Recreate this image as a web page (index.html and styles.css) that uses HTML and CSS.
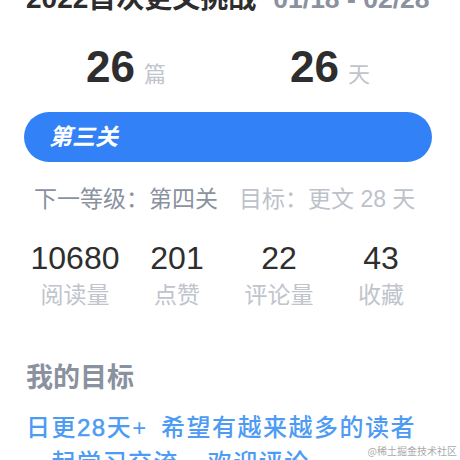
FILE: index.html
```html
<!DOCTYPE html>
<html lang="zh-CN">
<head>
<meta charset="utf-8">
<link rel="stylesheet" href="styles.css">
</head>
<body>
<div class="page">
  <div class="header">
    <span class="title">2022首次更文挑战</span>
    <span class="date">01/18 - 02/28</span>
  </div>
  <div class="totals">
    <div class="total"><span class="big">26</span><span class="unit">篇</span></div>
    <div class="total"><span class="big">26</span><span class="unit">天</span></div>
  </div>
  <div class="level">第三关</div>
  <div class="next">
    <span class="next-level">下一等级：第四关</span>
    <span class="next-goal">目标：更文 28 天</span>
  </div>
  <div class="stats">
    <div class="stat"><div class="num">10680</div><div class="label">阅读量</div></div>
    <div class="stat"><div class="num">201</div><div class="label">点赞</div></div>
    <div class="stat"><div class="num">22</div><div class="label">评论量</div></div>
    <div class="stat"><div class="num">43</div><div class="label">收藏</div></div>
  </div>
  <div class="goal-title">我的目标</div>
  <div class="goal-text">日更<span class="digits">28</span>天+ 希望有越来越多的读者<br>一起学习交流~ 欢迎评论</div>
</div>
<div class="watermark">@稀土掘金技术社区</div>
</body>
</html>
```

FILE: styles.css
```css
* { box-sizing: border-box; }
html, body { margin: 0; padding: 0; background: #fff; }
body {
  width: 460px;
  height: 460px;
  overflow: hidden;
  position: relative;
  font-family: "Liberation Sans", "Noto Sans CJK SC", sans-serif;
  color: #333;
}
.page {
  width: 408px;
  margin-left: 24px;
  margin-top: -15px;
}
.header {
  display: flex;
  align-items: baseline;
  gap: 17px;
  height: 28px;
  line-height: 28px;
  padding-left: 2px;
}
.title {
  font-size: 28px;
  font-weight: 700;
  color: #2d2d2d;
}
.date {
  font-size: 26.5px;
  font-weight: 700;
  color: #8a919f;
}
.totals {
  display: grid;
  grid-template-columns: 1fr 1fr;
  margin-top: 30px;
  height: 47px;
}
.total {
  display: flex;
  justify-content: center;
  align-items: baseline;
  gap: 9px;
  line-height: 47px;
}
.big {
  font-size: 44px;
  font-weight: 700;
  color: #2e2e2e;
}
.unit {
  font-size: 22px;
  color: #c0c4cc;
}
.level {
  margin-top: 22px;
  height: 50px;
  border-radius: 25px;
  background: #3281f6;
  color: #fff;
  font-size: 23px;
  font-weight: 700;
  font-style: italic;
  line-height: 50px;
  padding-left: 25px;
}
.next {
  display: flex;
  margin-top: 22px;
  padding-left: 10px;
  gap: 21px;
  font-size: 23px;
  line-height: 30px;
}
.next-level { color: #8a919f; }
.next-goal { color: #bcc1ca; }
.stats {
  display: grid;
  grid-template-columns: repeat(4, 1fr);
  margin-top: 26px;
  text-align: center;
}
.num {
  font-size: 32px;
  line-height: 36px;
  color: #2e2e2e;
}
.label {
  font-size: 23px;
  line-height: 32px;
  margin-top: 3px;
  color: #c0c4cc;
}
.goal-title {
  margin-top: 49px;
  padding-left: 2px;
  font-size: 27px;
  font-weight: 700;
  line-height: 36px;
  color: #8a919f;
}
.goal-text {
  margin-top: 14px;
  padding-left: 2px;
  font-size: 24px;
  font-weight: 500;
  letter-spacing: 1.5px;
  word-spacing: 5px;
  line-height: 35px;
  color: #4d9bf4;
}
.digits {
  -webkit-text-stroke: 0.5px #4d9bf4;
}
.watermark {
  position: absolute;
  right: 3px;
  bottom: 3px;
  font-size: 10px;
  line-height: 12px;
  color: #aaa;
  font-family: "Noto Sans CJK SC", sans-serif;
}
```
